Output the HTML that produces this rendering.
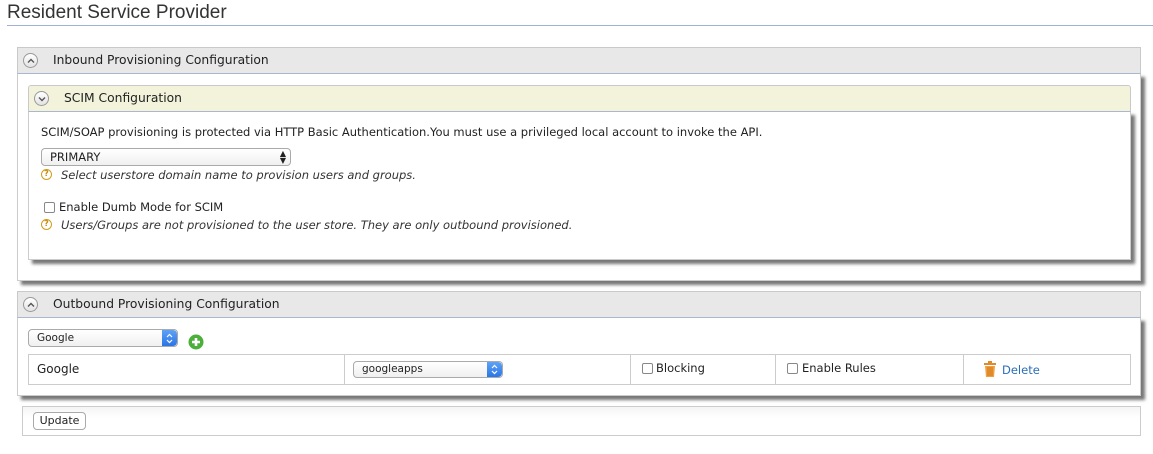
<!DOCTYPE html>
<html><head><meta charset="utf-8"><style>
*{box-sizing:border-box;margin:0;padding:0}
body{width:1153px;height:454px;background:#fff;font-family:"DejaVu Sans",sans-serif;font-size:11.5px;color:#222;position:relative;overflow:hidden}
.a{position:absolute;white-space:nowrap}
.title{left:7px;top:2px;font-size:19px;color:#333;font-family:"Liberation Sans",sans-serif}
.rule{left:7px;right:0;top:25px;height:1px;background:#9fb2d5}
.hdr{background:#e8e8e8;border:1px solid #c9c9c9;border-bottom:1px solid #a9b7d1;color:#111}
.ht{font-size:12.3px}
.body{background:#fff;border:1px solid #ccc;border-top:none;box-shadow:4px 4px 3px #777}
.circ{width:15px;height:15px;border-radius:50%;border:1px solid #999;background:linear-gradient(#fff,#e3e3e3)}
.sel{border:1px solid #aaa;border-radius:4px;background:linear-gradient(#fff,#f0f0f0);font-size:11.5px}
.help{width:11px;height:11px;border-radius:50%;border:1.5px solid #d59a1a;color:#c88a10;font-size:8px;line-height:8px;text-align:center;font-weight:bold}
.cb{width:11px;height:11px;border:1px solid #888;border-radius:2px;background:#fff}
.it{font-style:italic;color:#333}
.blue{width:15px;border-radius:0 4px 4px 0;background:linear-gradient(#5ea2f5,#2a75e6)}
</style></head><body>
<div class="a title">Resident Service Provider</div>
<div class="a rule"></div>

<div class="a body" style="left:17px;top:73px;width:1124px;height:208px"></div>
<div class="a hdr" style="left:17px;top:47px;width:1124px;height:27px"></div>
<div class="a circ" style="left:23px;top:53px"></div>
<svg class="a" style="left:26px;top:56px" width="10" height="10"><path d="M2 6.5L5 3.5L8 6.5" stroke="#555" stroke-width="1.4" fill="none"/></svg>
<div class="a ht" style="left:53px;top:53px">Inbound Provisioning Configuration</div>

<div class="a body" style="left:28px;top:111px;width:1103px;height:149px"></div>
<div class="a hdr" style="left:28px;top:85px;width:1103px;height:27px;background:#f3f3dc;border-radius:3px 3px 0 0"></div>
<div class="a circ" style="left:34px;top:91px"></div>
<svg class="a" style="left:37px;top:94px" width="10" height="10"><path d="M2 3.5L5 6.5L8 3.5" stroke="#555" stroke-width="1.4" fill="none"/></svg>
<div class="a ht" style="left:64px;top:91px">SCIM Configuration</div>

<div class="a" style="left:41px;top:125px">SCIM/SOAP provisioning is protected via HTTP Basic Authentication.You must use a privileged local account to invoke the API.</div>
<div class="a sel" style="left:41px;top:148px;width:250px;height:18px;padding:1px 8px">PRIMARY<span style="position:absolute;right:4px;top:1px;font-size:8px;line-height:7px">▲<br>▼</span></div>
<div class="a help" style="left:41px;top:169px">?</div>
<div class="a it" style="left:61px;top:168px">Select userstore domain name to provision users and groups.</div>
<div class="a cb" style="left:44px;top:202px"></div>
<div class="a" style="left:59px;top:200px">Enable Dumb Mode for SCIM</div>
<div class="a help" style="left:41px;top:219px">?</div>
<div class="a it" style="left:61px;top:218px">Users/Groups are not provisioned to the user store. They are only outbound provisioned.</div>

<div class="a body" style="left:17px;top:317px;width:1124px;height:79px"></div>
<div class="a hdr" style="left:17px;top:291px;width:1124px;height:27px"></div>
<div class="a circ" style="left:23px;top:297px"></div>
<svg class="a" style="left:26px;top:300px" width="10" height="10"><path d="M2 6.5L5 3.5L8 6.5" stroke="#555" stroke-width="1.4" fill="none"/></svg>
<div class="a ht" style="left:53px;top:297px">Outbound Provisioning Configuration</div>

<div class="a sel" style="left:28px;top:329px;width:150px;height:18px;padding:2px 8px;font-size:10.5px;overflow:hidden">Google<div class="a blue" style="right:0;top:0;height:16px"></div><svg class="a" style="right:3px;top:3px" width="9" height="11"><path d="M2 4L4.5 1.5L7 4M2 7L4.5 9.5L7 7" stroke="#fff" stroke-width="1.2" fill="none"/></svg></div>
<svg class="a" style="left:188px;top:334px" width="16" height="16"><circle cx="8" cy="8" r="7.5" fill="#4caf3a"/><path d="M8 4V12M4 8H12" stroke="#fff" stroke-width="2.6"/></svg>

<div class="a" style="left:28px;top:354px;width:1103px;height:31px;border:1px solid #ccc"></div>
<div class="a" style="left:344px;top:354px;width:1px;height:31px;background:#ccc"></div>
<div class="a" style="left:630px;top:354px;width:1px;height:31px;background:#ccc"></div>
<div class="a" style="left:775px;top:354px;width:1px;height:31px;background:#ccc"></div>
<div class="a" style="left:963px;top:354px;width:1px;height:31px;background:#ccc"></div>
<div class="a" style="left:37px;top:362px;font-size:12px">Google</div>
<div class="a sel" style="left:353px;top:361px;width:150px;height:17px;padding:1px 8px;font-size:10.5px;overflow:hidden">googleapps<div class="a blue" style="right:0;top:0;height:15px"></div><svg class="a" style="right:3px;top:2px" width="9" height="11"><path d="M2 4L4.5 1.5L7 4M2 7L4.5 9.5L7 7" stroke="#fff" stroke-width="1.2" fill="none"/></svg></div>
<div class="a cb" style="left:642px;top:363px"></div>
<div class="a" style="left:656px;top:361px">Blocking</div>
<div class="a cb" style="left:787px;top:363px"></div>
<div class="a" style="left:802px;top:361px">Enable Rules</div>
<svg class="a" style="left:983px;top:361px" width="14" height="17"><rect x="1" y="2" width="12" height="2" fill="#e08a2a"/><rect x="5" y="0" width="4" height="2" fill="#e08a2a"/><path d="M2 5H12L11 16H3Z" fill="#f0a040"/><path d="M5 6V15M7 6V15M9 6V15" stroke="#c86a10" stroke-width="0.8"/></svg>
<div class="a" style="left:1002px;top:363px;color:#2a6eb8">Delete</div>

<div class="a" style="left:22px;top:406px;width:1119px;height:30px;border:1px solid #ccc;background:linear-gradient(#f5f5f5,#fff 40%)"></div>
<div class="a" style="left:33px;top:412px;width:53px;height:18px;border:1px solid #aaa;border-radius:4px;background:#fff;font-size:11px;text-align:center;line-height:16px">Update</div>
</body></html>
